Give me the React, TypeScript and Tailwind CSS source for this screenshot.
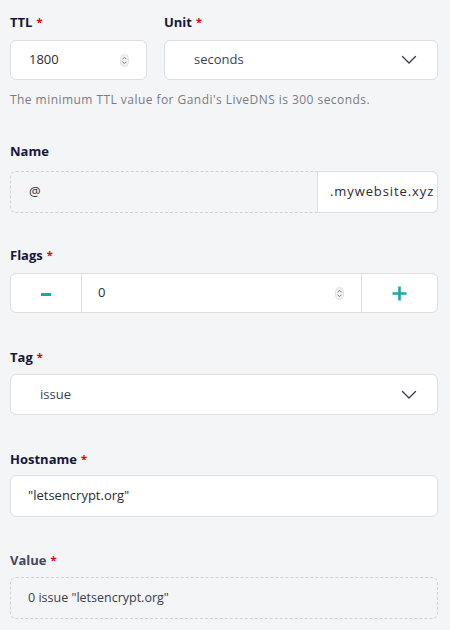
import type React from 'react';

const FONT = "font-['Open_Sans','Noto_Sans',sans-serif]";

/** 必填標記 */
const Req: React.FC = () => <span className="ml-1 text-[11px] align-top text-[#e00000]">*</span>;

const Label: React.FC<{ text: string; required?: boolean; muted?: boolean; className?: string }> = ({
  text,
  required,
  muted,
  className = '',
}) => (
  <div
    className={`text-[13px] leading-4 font-bold ${muted ? 'text-[#43475f]' : 'text-[#17173a]'} ${className}`}
  >
    {text}
    {required && <Req />}
  </div>
);

const Chevron: React.FC = () => (
  <svg width="16" height="10" viewBox="0 0 16 10" fill="none" className="shrink-0">
    <path d="M1.5 1.5L8 8L14.5 1.5" stroke="#3a3f52" strokeWidth="1.4" strokeLinecap="round" strokeLinejoin="round" />
  </svg>
);

const Spinner: React.FC = () => (
  <svg width="9" height="13" viewBox="0 0 9 13" fill="none" className="shrink-0">
    <rect x="0.5" y="0.5" width="8" height="12" rx="4" fill="#f3f3f5" stroke="#e2e2e6" />
    <path d="M2.8 5L4.5 3.3L6.2 5" stroke="#666" strokeWidth="0.9" strokeLinecap="round" strokeLinejoin="round" />
    <path d="M2.8 8L4.5 9.7L6.2 8" stroke="#666" strokeWidth="0.9" strokeLinecap="round" strokeLinejoin="round" />
  </svg>
);

export default function App() {
  return (
    <div className={`w-[450px] h-[630px] bg-[#f4f5f7] pl-[10px] pr-[12px] pt-[14px] ${FONT}`}>
      {/* TTL + Unit */}
      <div className="flex gap-[17px]">
        <div className="w-[137px]">
          <Label text="TTL" required className="mb-[10px]" />
          <div className="h-[40px] bg-white border border-[#dcdee3] rounded-[6px] flex items-center pl-[18px] pr-[17px] text-[13px] text-[#2b2b33]">
            <span className="flex-1">1800</span>
            <Spinner />
          </div>
        </div>
        <div className="flex-1">
          <Label text="Unit" required className="mb-[10px]" />
          <div className="h-[40px] bg-white border border-[#dcdee3] rounded-[6px] flex items-center pl-[29px] pr-[20px] text-[13px] text-[#3a3f55]">
            <span className="flex-1">seconds</span>
            <Chevron />
          </div>
        </div>
      </div>
      <p className="mt-[12px] text-[12px] leading-4 tracking-[0.45px] text-[#7a7c85]">
        The minimum TTL value for Gandi's LiveDNS is 300 seconds.
      </p>

      {/* Name */}
      <Label text="Name" className="mt-[35px] mb-[12px]" />
      <div className="h-[42px] flex rounded-[6px] border border-dashed border-[#cfd1d6] text-[13px] text-[#2b2b33]">
        <div className="flex-1 flex items-center pl-[18px]">@</div>
        <div className="w-[121px] shrink-0 -my-px -mr-px bg-white border border-[#dcdee3] rounded-r-[6px] flex items-center pl-[12px] text-[13px] tracking-[0.9px] whitespace-nowrap overflow-hidden">
          .mywebsite.xyz
        </div>
      </div>

      {/* Flags */}
      <Label text="Flags" required className="mt-[34px] mb-[10px]" />
      <div className="h-[40px] flex bg-white border border-[#dcdee3] rounded-[6px] text-[13px] text-[#2b2b33]">
        <div className="w-[71px] flex items-center justify-center border-r border-[#dcdee3]">
          <div className="w-[10px] h-[3px] bg-[#1aa8a8] mt-[3px]" />
        </div>
        <div className="flex-1 flex items-center pl-[16px] pr-[17px]">
          <span className="flex-1">0</span>
          <Spinner />
        </div>
        <div className="w-[76px] flex items-center justify-center border-l border-[#dcdee3]">
          <svg width="15" height="15" viewBox="0 0 15 15">
            <path d="M7.5 0.5V14.5M0.5 7.5H14.5" stroke="#1aa8a8" strokeWidth="2.6" />
          </svg>
        </div>
      </div>

      {/* Tag */}
      <Label text="Tag" required className="mt-[36px] mb-[9px]" />
      <div className="h-[41px] bg-white border border-[#dcdee3] rounded-[6px] flex items-center pl-[29px] pr-[20px] text-[13px] text-[#3a3f55]">
        <span className="flex-1">issue</span>
        <Chevron />
      </div>

      {/* Hostname */}
      <Label text="Hostname" required className="mt-[36px] mb-[8px]" />
      <div className="h-[42px] bg-white border border-[#dcdee3] rounded-[6px] flex items-center pl-[17px] text-[13px] text-[#2b2b33]">
        "letsencrypt.org"
      </div>

      {/* Value */}
      <Label text="Value" required muted className="mt-[35px] mb-[9px]" />
      <div className="h-[42px] border border-dashed border-[#cfd1d6] rounded-[6px] flex items-center pl-[17px] text-[12.5px] text-[#3a3d4a]">
        0 issue "letsencrypt.org"
      </div>
    </div>
  );
}
